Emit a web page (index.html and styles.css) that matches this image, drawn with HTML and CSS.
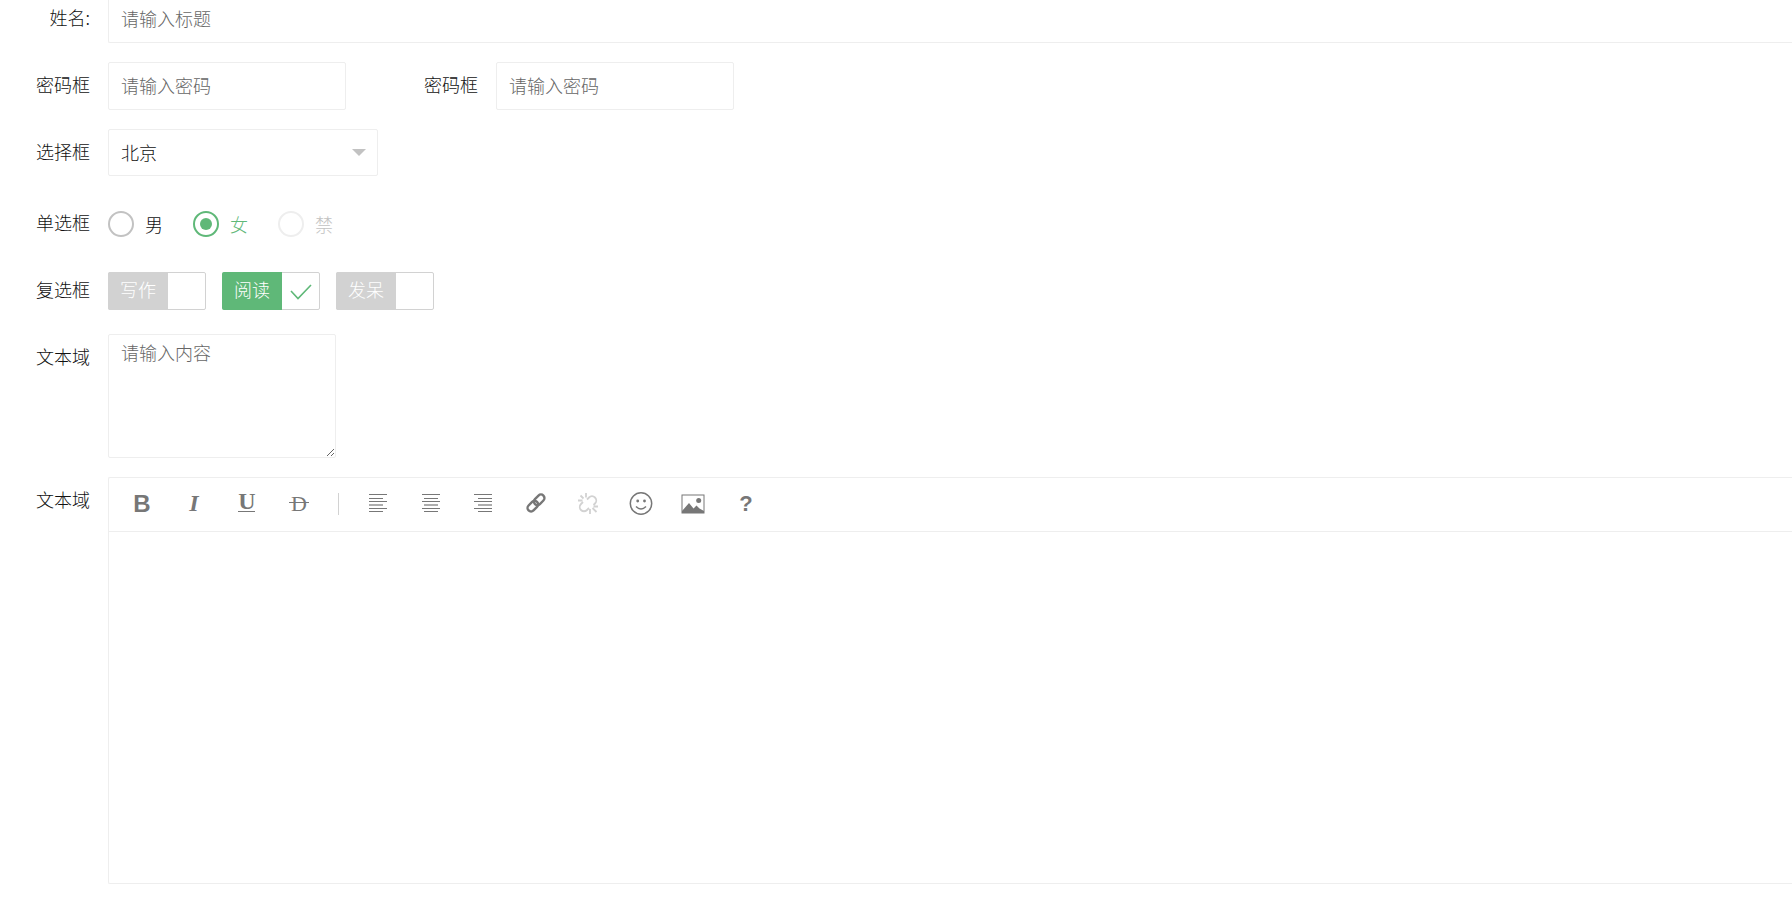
FILE: index.html
```html
<!DOCTYPE html>
<html lang="zh-CN">
<head>
    <meta charset="UTF-8">
    <meta name="viewport" content="width=device-width, initial-scale=1.0">
    <title>表单</title>
    <link rel="stylesheet" href="styles.css">
</head>
<body>
    <form class="form">
        <div class="form-item">
            <label class="form-label" for="title">姓名:</label>
            <input type="text" id="title" name="title" class="input input-full" placeholder="请输入标题" autocomplete="off">
        </div>

        <div class="form-item">
            <label class="form-label" for="password1">密码框</label>
            <input type="password" id="password1" name="password1" class="input input-short" placeholder="请输入密码" autocomplete="off">
            <label class="form-label form-label-next" for="password2">密码框</label>
            <input type="password" id="password2" name="password2" class="input input-short" placeholder="请输入密码" autocomplete="off">
        </div>

        <div class="form-item">
            <label class="form-label" for="city">选择框</label>
            <div class="select-wrap">
                <select id="city" name="city" class="input select">
                    <option>北京</option>
                    <option>上海</option>
                    <option>广州</option>
                    <option>深圳</option>
                </select>
            </div>
        </div>

        <div class="form-item form-item-radio">
            <span class="form-label" id="sexLabel">单选框</span>
            <div class="radio-group" role="radiogroup" aria-labelledby="sexLabel">
                <label class="radio"><input type="radio" name="sex" value="男"><span>男</span></label>
                <label class="radio"><input type="radio" name="sex" value="女" checked><span>女</span></label>
                <label class="radio"><input type="radio" name="sex" value="禁" disabled><span>禁</span></label>
            </div>
        </div>

        <div class="form-item">
            <span class="form-label" id="likeLabel">复选框</span>
            <div class="check-group" role="group" aria-labelledby="likeLabel">
                <label class="check">
                    <input type="checkbox" name="like[write]">
                    <span class="check-text">写作</span>
                    <svg class="check-icon" viewBox="0 0 24 24"><path d="M2 12l7 7.500L22 6"/></svg>
                </label>
                <label class="check">
                    <input type="checkbox" name="like[read]" checked>
                    <span class="check-text">阅读</span>
                    <svg class="check-icon" viewBox="0 0 24 24"><path d="M2 12l7 7.500L22 6"/></svg>
                </label>
                <label class="check">
                    <input type="checkbox" name="like[daze]">
                    <span class="check-text">发呆</span>
                    <svg class="check-icon" viewBox="0 0 24 24"><path d="M2 12l7 7.500L22 6"/></svg>
                </label>
            </div>
        </div>

        <div class="form-item">
            <label class="form-label" for="desc">文本域</label>
            <textarea id="desc" name="desc" class="input textarea" placeholder="请输入内容"></textarea>
        </div>

        <div class="form-item">
            <label class="form-label" for="editor">文本域</label>
            <div class="editor">
                <div class="toolbar">
                    <div class="tools tools-text">
                        <button type="button" class="tool" title="加粗">
                            <svg viewBox="0 0 24 24"><text class="t-sans" x="12" y="20">B</text></svg>
                        </button>
                        <button type="button" class="tool" title="斜体">
                            <svg viewBox="0 0 24 24"><text class="t-italic" x="12" y="19">I</text></svg>
                        </button>
                        <button type="button" class="tool" title="下划线">
                            <svg viewBox="0 0 24 24"><text class="t-serif" x="12" y="17">U</text><path d="M3 19.500h17"/></svg>
                        </button>
                        <button type="button" class="tool" title="删除线">
                            <svg viewBox="0 0 24 24"><text class="t-thin" x="12" y="19">D</text><path d="M2 10.500h20"/></svg>
                        </button>
                    </div>
                    <span class="divider"></span>
                    <div class="tools tools-insert">
                        <button type="button" class="tool" title="左对齐">
                            <svg viewBox="0 0 24 24"><path d="M3 2.500h18M3 6.500h14M3 9.500h18M3 16.500h18M3 19.500h14"/><path class="soft" d="M3 13h14"/></svg>
                        </button>
                        <button type="button" class="tool" title="居中对齐">
                            <svg viewBox="0 0 24 24"><path d="M3 2.500h18M5 6.500h14M3 9.500h18M3 16.500h18M5 19.500h14"/><path class="soft" d="M5 13h14"/></svg>
                        </button>
                        <button type="button" class="tool" title="右对齐">
                            <svg viewBox="0 0 24 24"><path d="M3 2.500h18M7 6.500h14M3 9.500h18M3 16.500h18M7 19.500h14"/><path class="soft" d="M7 13h14"/></svg>
                        </button>
                        <button type="button" class="tool" title="插入链接">
                            <svg viewBox="0 0 24 24"><g class="chain" transform="rotate(-45 12 11)"><rect x="1.500" y="7.500" width="12" height="7" rx="3.500"/><rect x="10.500" y="7.500" width="12" height="7" rx="3.500"/></g></svg>
                        </button>
                        <button type="button" class="tool" title="清除链接" disabled>
                            <svg viewBox="0 0 24 24"><path class="broken" d="M11 7.500l2-2a4 4 0 0 1 6 6l-1.500 1.500M7 10l-2 2a4 4 0 0 0 6 6l2-2M10 1v4.500M4.500 3.500l3 3M2 8.500h4.500M14 17v5M16.500 16l4 4M17.500 14.500H22"/></svg>
                        </button>
                        <button type="button" class="tool" title="表情">
                            <svg viewBox="0 0 24 24"><circle class="ring" cx="12" cy="11.500" r="10.700"/><circle class="dot" cx="8.700" cy="9" r="1.400"/><circle class="dot" cx="15.500" cy="9" r="1.400"/><path class="ring" d="M7 14.500q5 5 10 0"/></svg>
                        </button>
                        <button type="button" class="tool" title="图片">
                            <svg viewBox="0 0 24 24"><rect x="1" y="3" width="22" height="18"/><circle class="dot" cx="17.700" cy="8.500" r="2.500"/><path class="dot" d="M1 19l7-8 4.500 5.500 3-3 3 3 4.500 2.500v2H1z"/></svg>
                        </button>
                        <button type="button" class="tool" title="帮助">
                            <svg viewBox="0 0 24 24"><text class="t-help" x="12" y="19">?</text></svg>
                        </button>
                    </div>
                </div>
                <textarea id="editor" name="content" class="editor-body"></textarea>
            </div>
        </div>
    </form>
</body>
</html>
```
FILE: styles.css
```css
* {
    box-sizing: border-box;
}
body {
    margin: 0;
    background: #fff;
    color: #111;
    font-family: "Noto Sans CJK SC", sans-serif;
    font-size: 18px;
    font-weight: 300;
    line-height: 24px;
}
input, select, textarea, button {
    margin: 0;
    font: inherit;
    color: inherit;
}
.form {
    display: flex;
    flex-direction: column;
    gap: 19px;
    margin-top: -5px;
}
.form-item {
    display: flex;
    align-items: flex-start;
    min-height: 48px;
}
.form-item-radio {
    margin-top: 4px;
}
.form-label {
    flex: none;
    width: 108px;
    padding: 10px 18px 12px 0;
    text-align: right;
}
.form-label-next {
    margin-left: 42px;
}
.input {
    height: 48px;
    padding: 0 12px 2px;
    border: 1px solid #eee;
    border-radius: 2px;
    background: #fff;
    outline: none;
}
.input::placeholder {
    color: #666;
}
.input-full {
    flex: 1;
    border-right: none;
    border-radius: 2px 0 0 2px;
}
.input-short {
    width: 238px;
}

/* select */
.select-wrap {
    position: relative;
    width: 270px;
}
.select-wrap::after {
    content: "";
    position: absolute;
    top: 20px;
    right: 12px;
    border: 7px solid transparent;
    border-top-color: #c2c2c2;
    border-bottom: none;
    pointer-events: none;
}
.select {
    width: 100%;
    height: 47px;
    appearance: none;
}

/* radio */
.radio-group {
    display: flex;
    gap: 30px;
    padding-top: 11px;
}
.radio {
    display: flex;
    align-items: center;
    gap: 11px;
    cursor: pointer;
}
.radio input {
    display: grid;
    place-items: center;
    width: 26px;
    height: 26px;
    border: 2px solid #c2c2c2;
    border-radius: 50%;
    appearance: none;
}
.radio input:checked {
    border-color: #5fb878;
}
.radio input:checked::before {
    content: "";
    width: 12px;
    height: 12px;
    border-radius: 50%;
    background: #5fb878;
}
.radio input:checked + span {
    color: #5fb878;
}
.radio input:disabled {
    border-color: #eee;
}
.radio input:disabled + span {
    color: #c2c2c2;
}

/* checkbox */
.check-group {
    display: flex;
    gap: 16px;
    padding-top: 5px;
}
.check {
    position: relative;
    display: flex;
    width: 98px;
    height: 38px;
    border: 1px solid #d2d2d2;
    border-radius: 2px;
    cursor: pointer;
}
.check input {
    position: absolute;
    inset: 0;
    appearance: none;
}
.check-text {
    margin: -1px 0 -1px -1px;
    padding: 5px 12px 9px;
    border-radius: 2px 0 0 2px;
    background: #d2d2d2;
    color: #fff;
}
.check-icon {
    width: 24px;
    height: 24px;
    margin: 6px auto;
    fill: none;
    stroke: none;
    stroke-width: 1.6;
}
.check input:checked ~ .check-text {
    background: #5fb878;
}
.check input:checked ~ .check-icon {
    stroke: #5fb878;
}

/* textarea */
.textarea {
    width: 228px;
    height: 124px;
    padding: 5px 12px;
    resize: both;
}

/* editor */
.editor {
    flex: 1;
    border: 1px solid #eee;
    border-right: none;
    border-radius: 2px 0 0 2px;
}
.toolbar {
    display: flex;
    align-items: center;
    gap: 19px;
    padding: 6px 13px 7px;
    border-bottom: 1px solid #eee;
}
.tools {
    display: flex;
    justify-content: space-between;
}
.tools-text {
    width: 197px;
}
.tools-insert {
    width: 408px;
}
.divider {
    width: 1px;
    height: 22px;
    background: #d2d2d2;
}
.tool {
    display: flex;
    align-items: center;
    justify-content: center;
    width: 40px;
    height: 40px;
    padding: 0;
    border: none;
    background: none;
    color: #777;
    cursor: pointer;
}
.tool:disabled {
    color: #d2d2d2;
    cursor: default;
}
.tool svg {
    width: 24px;
    height: 24px;
    overflow: visible;
    fill: none;
    stroke: currentColor;
    stroke-width: 1;
}
.tool text {
    fill: currentColor;
    stroke: none;
    text-anchor: middle;
    font-size: 24px;
}
.tool .t-sans {
    font-family: "Liberation Sans", sans-serif;
    font-weight: 700;
}
.tool .t-italic {
    font-family: "Liberation Serif", serif;
    font-style: italic;
    font-weight: 700;
}
.tool .t-serif {
    font-family: "Liberation Serif", serif;
    font-weight: 700;
}
.tool .t-thin {
    font-family: "Liberation Serif", serif;
    font-size: 22px;
    font-weight: 400;
}
.tool .t-help {
    font-family: "Liberation Sans", sans-serif;
    font-size: 22px;
    font-weight: 700;
}
.tool .soft {
    stroke-width: 2;
    opacity: 0.6;
}
.tool .chain {
    stroke-width: 2.4;
}
.tool .broken {
    stroke-width: 1.8;
}
.tool .ring {
    stroke-width: 1.5;
}
.tool .dot {
    fill: currentColor;
    stroke: none;
}
.editor-body {
    display: block;
    width: 100%;
    height: 351px;
    padding: 10px 12px;
    border: none;
    background: none;
    outline: none;
    resize: none;
}
```
